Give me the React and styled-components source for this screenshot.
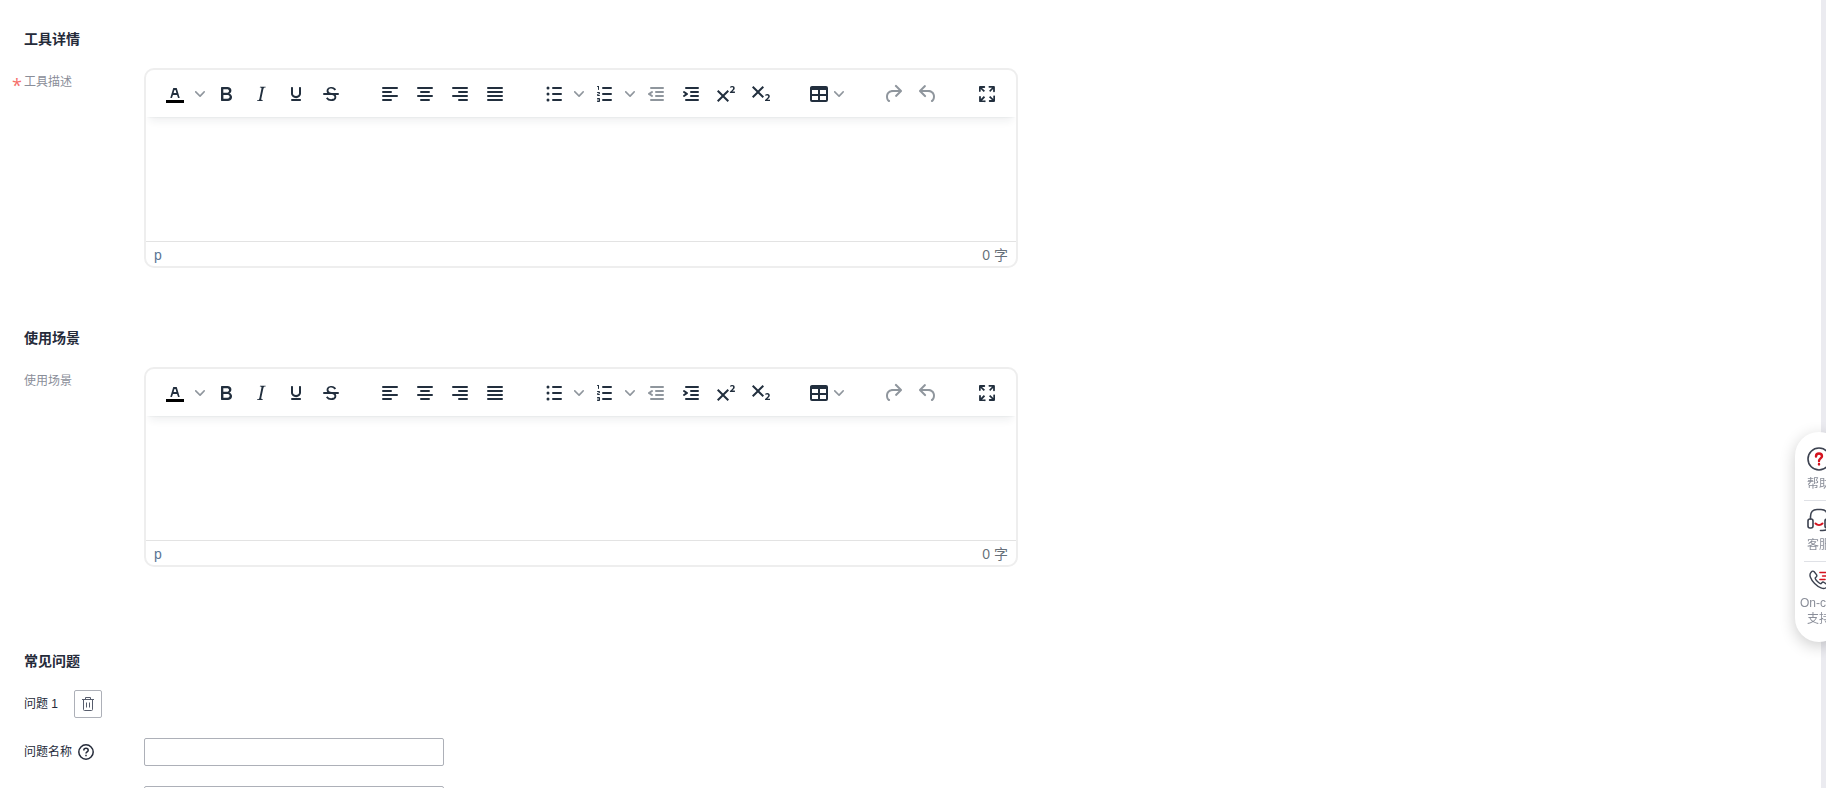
import React from "react";
import styled, { createGlobalStyle } from "styled-components";

const GlobalStyle = createGlobalStyle`
  *, *::before, *::after { box-sizing: border-box; }
  body {
    margin: 0;
    background: #fff;
    color: #252b3a;
    font-family: "Liberation Sans", "Noto Sans CJK SC", sans-serif;
    font-size: 12px;
    line-height: 18px;
  }
  button, input, textarea { font: inherit; color: inherit; }
`;

const Shell = styled.div`
  display: flex;
  height: 100vh;
  overflow: hidden;
`;

const Form = styled.main`
  flex: 1;
  min-width: 0;
  padding: 29px 24px 0;
  overflow: hidden;
`;

const ScrollTrack = styled.div`
  flex: none;
  width: 5px;
  background: #ebebf0;
`;

const Section = styled.section`
  margin-bottom: ${(p) => p.$gap}px;
`;

const Title = styled.h2`
  margin: 0 0 19px;
  font-size: 14px;
  line-height: 20px;
  font-weight: 700;
`;

const Field = styled.div`
  display: grid;
  grid-template-columns: 120px minmax(0, 1fr);
  align-items: ${(p) => (p.$top ? "start" : "center")};
  margin-bottom: ${(p) => p.$gap || 0}px;
`;

const FieldLabel = styled.label`
  display: flex;
  align-items: center;
  gap: 6px;
  padding-top: ${(p) => (p.$top ? 5 : 0)}px;
  color: ${(p) => (p.$muted ? "#8a8e99" : "#252b3a")};
`;

const Required = styled.span`
  width: 12px;
  height: 14px;
  margin-left: -12px;
  margin-right: -6px;
  color: #f66f6a;
  font-family: "Open Sans", sans-serif;
  font-size: 18px;
  line-height: 20px;
`;

const EditorFrame = styled.div`
  display: flex;
  flex-direction: column;
  width: 874px;
  max-width: 100%;
  border: 2px solid #eee;
  border-radius: 10px;
  overflow: hidden;
  background: #fff;
`;

const Toolbar = styled.div`
  display: flex;
  gap: 1px;
  padding: 10px 0 9px;
  box-shadow: 0 2px 2px -2px rgba(34, 47, 62, 0.1), 0 8px 8px -4px rgba(34, 47, 62, 0.07);
  z-index: 1;
`;

const ToolGroup = styled.div`
  display: flex;
  gap: 1px;
  padding: 0 12px;
`;

const Split = styled.div`
  display: flex;
`;

const ToolButton = styled.button`
  display: flex;
  align-items: center;
  justify-content: center;
  width: ${(p) => p.$width || 34}px;
  height: 28px;
  padding: 0;
  border: 0;
  border-radius: 3px;
  background: none;
  color: #222f3e;
  opacity: ${(p) => (p.disabled ? 0.5 : 1)};
  cursor: pointer;
`;

const Glyph = styled.svg`
  flex: none;
  display: block;
  width: 24px;
  height: 24px;
  fill: currentColor;
`;

const ChevronBox = styled.span`
  display: flex;
  justify-content: center;
  width: 16px;
  opacity: 0.5;
`;

const EditArea = styled.textarea`
  display: block;
  width: 100%;
  height: 124px;
  padding: 16px;
  border: 0;
  outline: 0;
  resize: none;
  font-size: 14px;
`;

const StatusBar = styled.div`
  display: flex;
  justify-content: space-between;
  align-items: center;
  height: 25px;
  padding: 2px 8px 0;
  border-top: 1px solid #e3e3e3;
  color: rgba(34, 47, 62, 0.7);
  font-size: 14px;
  line-height: 20px;
`;

const PathItem = styled.span`
  color: #5a7595;
`;

const QuestionHead = styled.div`
  display: flex;
  align-items: center;
  gap: 16px;
  margin-bottom: 20px;
`;

const IconButton = styled.button`
  display: flex;
  align-items: center;
  justify-content: center;
  width: 28px;
  height: 28px;
  padding: 0;
  border: 1px solid #adb0b8;
  border-radius: 2px;
  background: #fff;
  color: #575d6c;
  cursor: pointer;
`;

const TextInput = styled.input`
  width: 300px;
  max-width: 100%;
  height: 28px;
  padding: 0 8px;
  border: 1px solid #adb0b8;
  border-radius: 2px;
  background: #fff;
`;

const TextBox = styled.textarea`
  display: block;
  width: 300px;
  max-width: 100%;
  height: 80px;
  padding: 4px 8px;
  border: 1px solid #adb0b8;
  border-radius: 2px;
  resize: none;
`;

const SupportDock = styled.aside`
  position: fixed;
  right: -17px;
  top: 432px;
  width: 48px;
  height: 210px;
  padding: 12px 0;
  border-radius: 24px;
  background: #fff;
  box-shadow: 0 4px 16px rgba(0, 0, 0, 0.2);
`;

const DockLink = styled.a`
  display: flex;
  flex-direction: column;
  align-items: center;
  height: 61px;
  padding-top: 3px;
  color: #8a8e99;
  line-height: 16px;
  text-align: center;
  text-decoration: none;
  white-space: nowrap;
`;

const DockRule = styled.hr`
  height: 1px;
  margin: -5px 9px 4px;
  border: 0;
  background: #dfe1e6;
`;

const DockIcon = styled.svg`
  display: block;
  width: 24px;
  height: 24px;
  margin-bottom: 5px;
  fill: none;
  stroke: #3c4250;
  stroke-width: 1.6;
  stroke-linecap: round;
  stroke-linejoin: round;
`;

const bar = (x, y, w) => `M${x + 1} ${y}h${w - 2}a1 1 0 0 1 0 2H${x + 1}a1 1 0 0 1 0-2Z`;

const paths = {
  bold: "M7.8 19c-.3 0-.5 0-.6-.2l-.2-.5V5.7c0-.2 0-.4.2-.5l.6-.2h5c1.5 0 2.7.3 3.5 1 .7.6 1.1 1.4 1.1 2.5a3 3 0 0 1-.6 1.9c-.4.6-1 1-1.6 1.2.4.1.9.3 1.3.6s.8.7 1 1.2c.4.4.5 1 .5 1.6 0 1.3-.4 2.3-1.3 3-.8.7-2.1 1-3.8 1H7.8Zm5-8.3c.6 0 1.2-.1 1.6-.5.4-.3.6-.7.6-1.3 0-1.1-.8-1.7-2.3-1.7H9.3v3.5h3.4Zm.5 6c.7 0 1.3-.1 1.7-.4.4-.4.6-.9.6-1.5s-.2-1-.7-1.4c-.4-.3-1-.4-2-.4H9.4v3.8h4Z",
  italic: "m16.7 4.7-.1.9h-.3c-.6 0-1 0-1.4.3-.3.3-.4.6-.5 1.1l-2.1 9.8v.6c0 .5.4.8 1.4.8h.2l-.2.8H8l.2-.8h.2c1.1 0 1.8-.5 2-1.5l2-9.8.1-.5c0-.6-.4-.8-1.4-.8h-.3l.2-.9h5.8Z",
  underline: "M16 5c.6 0 1 .4 1 1v5.5a4 4 0 0 1-.4 1.8l-1 1.4a5.3 5.3 0 0 1-5.5 1 5 5 0 0 1-1.6-1c-.5-.4-.8-.9-1.1-1.4a4 4 0 0 1-.4-1.8V6c0-.6.4-1 1-1s1 .4 1 1v5.500c0 .3 0 .6.2 1l.6.7a3.3 3.3 0 0 0 2.2.8 3.4 3.4 0 0 0 2.2-.8c.3-.2.4-.5.6-.8l.2-.9V6c0-.6.4-1 1-1ZM8 17h8c.6 0 1 .4 1 1s-.4 1-1 1H8a1 1 0 0 1 0-2Z",
  strike: "M15.6 8.5c-.5-.7-1-1.1-1.3-1.3-.6-.4-1.3-.6-2-.6-2.7 0-2.8 1.7-2.8 2.1 0 1.6 1.8 2 3.2 2.3 4.4.9 4.6 2.8 4.6 3.9 0 1.4-.7 4.1-5 4.1A6.2 6.2 0 0 1 7 16.4l1.5-1.1c.4.6 1.6 2 3.7 2 1.6 0 2.5-.4 3-1.2.4-.8.3-2-.8-2.6-.7-.4-1.6-.7-2.9-1-1-.2-3.9-.8-3.9-3.6C7.6 6 10.3 5 12.4 5c2.9 0 4.2 1.6 4.7 2.4l-1.5 1.1ZM5 11h14a1 1 0 0 1 0 2H5a1 1 0 0 1 0-2Z",
  left: bar(4, 5, 16) + bar(4, 9, 10) + bar(4, 13, 16) + bar(4, 17, 10),
  center: bar(4, 5, 16) + bar(7, 9, 10) + bar(4, 13, 16) + bar(7, 17, 10),
  right: bar(4, 5, 16) + bar(10, 9, 10) + bar(4, 13, 16) + bar(10, 17, 10),
  justify: bar(4, 5, 16) + bar(4, 9, 16) + bar(4, 13, 16) + bar(4, 17, 16),
  bullets: bar(10, 5, 10) + bar(10, 11, 10) + bar(10, 17, 10) +
    "M4.500 6a1.500 1.500 0 1 1 3 0 1.500 1.500 0 0 1-3 0ZM4.500 12a1.500 1.500 0 1 1 3 0 1.500 1.500 0 0 1-3 0ZM4.500 18a1.500 1.500 0 1 1 3 0 1.500 1.500 0 0 1-3 0Z",
  numbers: bar(9, 5, 10) + bar(9, 11, 10) + bar(9, 17, 10) +
    "M6 4v3.5c0 .3-.2.5-.5.5a.5.5 0 0 1-.5-.5V5h-.5a.5.5 0 0 1 0-1H6Zm-1 8.8.2.2h1.3c.3 0 .5.2.5.5s-.2.5-.5.5H4.9a1 1 0 0 1-.9-1V13c0-.4.3-.8.6-1l1.2-.4.2-.3a.2.2 0 0 0-.2-.2H4.5a.5.5 0 0 1-.5-.5c0-.3.2-.5.5-.5h1.6c.5 0 .9.4.9 1v.1c0 .4-.3.8-.6 1l-1.2.4-.2.3ZM7 17v2c0 .6-.4 1-1 1H4.5a.5.5 0 0 1 0-1h1.2c.2 0 .3-.1.3-.3 0-.2-.1-.3-.3-.3H4.4a.4.4 0 1 1 0-.8h1.3c.2 0 .3-.1.3-.3 0-.2-.1-.3-.3-.3H4.5a.5.5 0 1 1 0-1H6c.6 0 1 .4 1 1Z",
  outdent: bar(6, 5, 14) + bar(11, 9, 9) + bar(11, 13, 9) + bar(6, 17, 14) +
    "M8.6 13.2a1 1 0 0 1-1.2 1.6l-3-2a1 1 0 0 1 0-1.6l3-2a1 1 0 0 1 1.2 1.6L6.8 12l1.8 1.2Z",
  indent: bar(6, 5, 14) + bar(11, 9, 9) + bar(11, 13, 9) + bar(6, 17, 14) +
    "M4.4 13.2 6.2 12l-1.8-1.2a1 1 0 0 1 1.2-1.6l3 2a1 1 0 0 1 0 1.6l-3 2a1 1 0 1 1-1.2-1.6Z",
  superscript: "M15 9.4 10.4 14l4.6 4.6-1.4 1.4L9 15.4 4.4 20 3 18.6 7.6 14 3 9.4 4.4 8 9 12.6 13.6 8 15 9.4Zm5.9 1.6h-5v-1l1-.8 1.7-1.6c.3-.5.5-.9.5-1.3 0-.3 0-.5-.2-.7-.2-.2-.5-.3-.9-.3l-.8.2-.7.4-.4-1.2c.2-.2.5-.4 1-.5.3-.2.8-.2 1.2-.2.8 0 1.4.2 1.8.6.4.4.6 1 .6 1.6 0 .5-.2 1-.5 1.5l-1.3 1.4-.6.5h2.6V11Z",
  subscript: "m10.4 10 4.6 4.6-1.4 1.4L9 11.4 4.4 16 3 14.6 7.6 10 3 5.4 4.4 4 9 8.6 13.6 4 15 5.4 10.4 10ZM21 19h-5v-1l1-.8 1.7-1.6c.3-.4.5-.8.5-1.2 0-.3 0-.6-.2-.7-.2-.2-.5-.3-.9-.3a2 2 0 0 0-.8.2l-.7.3-.4-1.1 1-.6 1.2-.2c.8 0 1.4.3 1.8.7.4.4.6.9.6 1.5s-.2 1.1-.5 1.6a8 8 0 0 1-1.3 1.3l-.6.6h2.6V19Z",
  table: "M19 4a2 2 0 0 1 2 2v12a2 2 0 0 1-2 2H5a2 2 0 0 1-2-2V6c0-1.1.9-2 2-2h14ZM5 14v4h6v-4H5Zm14 0h-6v4h6v-4Zm0-6h-6v4h6V8ZM5 12h6V8H5v4Z",
  redo: "M17.6 10H12c-2.8 0-4.4 1.4-4.9 3.5-.4 2 .3 4 1.4 4.6a1 1 0 1 1-1 1.8c-2-1.2-2.9-4.1-2.3-6.8.6-3 3-5.1 6.8-5.1h5.6l-3.3-3.3a1 1 0 1 1 1.4-1.4l5 5a1 1 0 0 1 0 1.4l-5 5a1 1 0 0 1-1.4-1.4l3.3-3.3Z",
  undo: "M6.4 8H12c3.7 0 6.2 2 6.8 5.1.6 2.7-.4 5.6-2.3 6.8a1 1 0 0 1-1-1.8c1.1-.6 1.8-2.7 1.4-4.6-.5-2.1-2.1-3.5-4.9-3.5H6.4l3.3 3.3a1 1 0 1 1-1.4 1.4l-5-5a1 1 0 0 1 0-1.4l5-5a1 1 0 0 1 1.4 1.4L6.4 8Z",
  fullscreen: "m15.3 10-1.2-1.3 2.9-3h-2.3a.9.9 0 1 1 0-1.7H19c.5 0 .9.4.9.9v4.4a.9.9 0 1 1-1.8 0V7l-2.9 3Zm0 4 3 3v-2.3a.9.9 0 1 1 1.7 0V19c0 .5-.4.9-.9.9h-4.4a.9.9 0 1 1 0-1.8H17l-3-2.9 1.3-1.2ZM10 15.4l-2.9 3h2.3a.9.9 0 1 1 0 1.7H5a.9.9 0 0 1-.9-.9v-4.4a.9.9 0 1 1 1.8 0V17l2.9-3 1.2 1.3ZM8.7 10 5.7 7v2.3a.9.9 0 0 1-1.7 0V5c0-.5.4-.9.9-.9h4.4a.9.9 0 0 1 0 1.8H7l3 2.9-1.3 1.2Z",
};

const Icon = ({ name }) => (
  <Glyph viewBox="0 0 24 24" aria-hidden="true">
    {name === "color" ? (
      <>
        <path fill="#000" d="M3 18h18v3H3z" />
        <path d="M8.7 16h-.8a.5.5 0 0 1-.5-.6l2.7-9c.1-.3.3-.4.5-.4h2.8c.2 0 .4.1.5.4l2.7 9a.5.5 0 0 1-.5.6h-.8a.5.5 0 0 1-.4-.4l-.7-2.2c0-.3-.3-.4-.5-.4h-3.4c-.2 0-.4.1-.5.4l-.7 2.2c0 .3-.2.4-.4.4Zm2.6-7.6-.6 2a.5.5 0 0 0 .5.6h1.6a.5.5 0 0 0 .5-.6l-.6-2c0-.3-.3-.4-.5-.4h-.4c-.2 0-.4.1-.5.4Z" />
      </>
    ) : (
      <path d={paths[name]} />
    )}
  </Glyph>
);

const Chevron = () => (
  <ChevronBox>
    <svg width="10" height="10" viewBox="0 0 10 10" fill="currentColor" aria-hidden="true">
      <path d="M8.7 2.2c.3-.3.8-.3 1 0 .4.4.4.9 0 1.2L5.7 7.8c-.3.3-.9.3-1.2 0L.2 3.4a.8.8 0 0 1 0-1.2c.3-.3.8-.3 1.1 0L5 6l3.7-3.8Z" />
    </svg>
  </ChevronBox>
);

const groups = [
  [["color", "文本颜色", "split"], ["bold", "粗体"], ["italic", "斜体"], ["underline", "下划线"], ["strike", "删除线"]],
  [["left", "左对齐"], ["center", "居中"], ["right", "右对齐"], ["justify", "两端对齐"]],
  [["bullets", "项目符号", "split"], ["numbers", "编号列表", "split"], ["outdent", "减少缩进", "off"], ["indent", "增加缩进"], ["superscript", "上标"], ["subscript", "下标"]],
  [["table", "表格", "menu"]],
  [["redo", "重做", "off"], ["undo", "撤销", "off"]],
  [["fullscreen", "全屏"]],
];

const Tool = ({ name, label, kind }) => {
  if (kind === "split") {
    return (
      <Split>
        <ToolButton type="button" aria-label={label}><Icon name={name} /></ToolButton>
        <ToolButton type="button" aria-label={`${label}选项`} $width={16}><Chevron /></ToolButton>
      </Split>
    );
  }
  return (
    <ToolButton type="button" aria-label={label} disabled={kind === "off"} $width={kind === "menu" ? 48 : 34}>
      <Icon name={name} />
      {kind === "menu" && <Chevron />}
    </ToolButton>
  );
};

const Editor = ({ id }) => (
  <EditorFrame>
    <Toolbar role="toolbar">
      {groups.map((tools, i) => (
        <ToolGroup key={i}>
          {tools.map(([name, label, kind]) => (
            <Tool key={name} name={name} label={label} kind={kind} />
          ))}
        </ToolGroup>
      ))}
    </Toolbar>
    <EditArea id={id} />
    <StatusBar>
      <PathItem>p</PathItem>
      <span>0 字</span>
    </StatusBar>
  </EditorFrame>
);

const TrashIcon = () => (
  <svg width="14" height="16" viewBox="0 0 14 16" fill="none" stroke="currentColor" aria-hidden="true">
    <path d="M1 3.5h12M4.5 3.5v-2h5v2M2.5 3.5v10a1 1 0 0 0 1 1h7a1 1 0 0 0 1-1v-10M5.5 6.5v5M8.5 6.5v5" />
  </svg>
);

const HelpIcon = () => (
  <svg width="16" height="16" viewBox="0 0 16 16" fill="none" stroke="#252b3a" strokeWidth="1.5" aria-hidden="true">
    <circle cx="8" cy="8" r="7.2" />
    <path d="M5.8 6.4c0-1.3 1-2.1 2.2-2.1s2.2.8 2.2 2c0 1.6-2.2 1.6-2.2 3.3M8 10.800v1.500" />
  </svg>
);

export default function App() {
  return (
    <>
      <GlobalStyle />
      <Shell>
        <Form>
          <Section $gap={60}>
            <Title>工具详情</Title>
            <Field $top>
              <FieldLabel htmlFor="tool-description" $muted $top>
                <Required>*</Required>工具描述
              </FieldLabel>
              <Editor id="tool-description" />
            </Field>
          </Section>
          <Section $gap={84}>
            <Title>使用场景</Title>
            <Field $top>
              <FieldLabel htmlFor="usage-scene" $muted $top>使用场景</FieldLabel>
              <Editor id="usage-scene" />
            </Field>
          </Section>
          <Section $gap={0}>
            <Title>常见问题</Title>
            <QuestionHead>
              <span>问题 1</span>
              <IconButton type="button" aria-label="删除问题"><TrashIcon /></IconButton>
            </QuestionHead>
            <Field $gap={20}>
              <FieldLabel htmlFor="question-name">问题名称<HelpIcon /></FieldLabel>
              <TextInput id="question-name" type="text" />
            </Field>
            <Field $top>
              <span />
              <TextBox aria-label="问题解答" />
            </Field>
          </Section>
        </Form>
        <ScrollTrack />
      </Shell>
      <SupportDock>
        <DockLink href="#help">
          <DockIcon viewBox="0 0 24 24" aria-hidden="true">
            <circle cx="12" cy="12" r="11" />
            <path stroke="#d5121e" strokeWidth="2.4" d="M9 9.500c0-2 1.300-3 3-3s3 1.100 3 2.700c0 2.200-3 2.300-3 4.800M12 17v.4" />
          </DockIcon>
          帮助
        </DockLink>
        <DockRule />
        <DockLink href="#service">
          <DockIcon viewBox="0 0 24 24" aria-hidden="true">
            <path d="M3.500 11V8.500C3.500 4 6 1.500 10 1.500h4c4 0 6.500 2.500 6.500 7V11M20.500 20c0 2-2 2.500-5 2.500h-2" />
            <rect x="1" y="11" width="5" height="9" rx="2" />
            <rect x="18" y="11" width="5" height="9" rx="2" />
            <path stroke="#d5121e" strokeWidth="2" d="M8.500 15.500c2 2 5 2 7 0" />
          </DockIcon>
          客服
        </DockLink>
        <DockRule />
        <DockLink href="#on-call">
          <DockIcon viewBox="0 0 24 24" aria-hidden="true">
            <path d="M6.500 3.200C5.500 2 4.300 2.300 3 3.600 0 6.500 2.500 12 7 16.500S17.500 24 20.500 21c1.300-1.300 1.500-2.400.4-3.400l-3-2.200c-1-.7-2-.5-2.700.4l-.9 1c-1.400.6-7.300-5.200-6.600-6.600l1-1c.9-.8 1.100-1.700.4-2.700L6.500 3.200Z" />
            <path stroke="#d5121e" d="M13 4h8M16 8h5M13 12h6" />
          </DockIcon>
          On-call<br />支持
        </DockLink>
      </SupportDock>
    </>
  );
}
